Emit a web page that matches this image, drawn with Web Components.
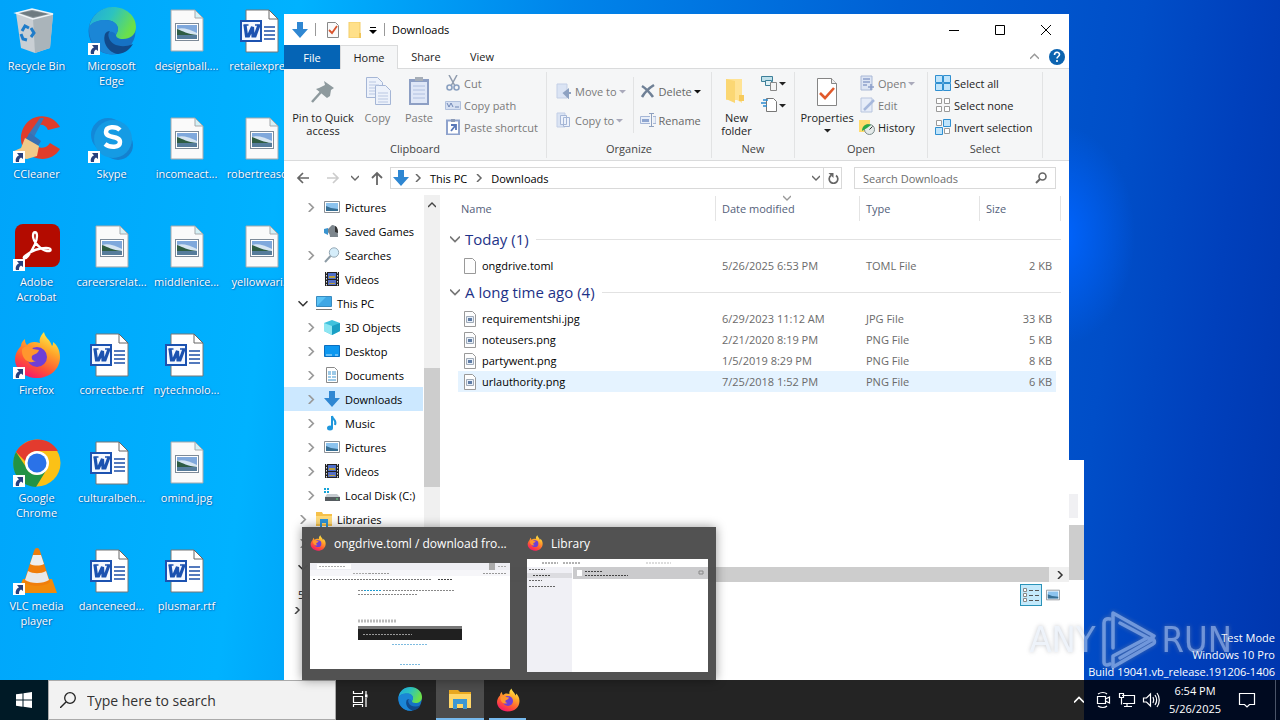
<!DOCTYPE html>
<html lang="en">
<head>
<meta charset="utf-8">
<title>Downloads</title>
<style>
html, body { margin: 0; height: 100%; overflow: hidden; }
body { font-family: "Open Sans", "Noto Sans", sans-serif; font-size: 11px; color: #111; }
</style>
</head>
<body>
<desktop-shell></desktop-shell>
<script>
const ICONS = {
  bin: ['0 0 48 48', '<path d="M3 6l16-4 21 5-3 34-15 5-14-5z" fill="#c9cfd4"/><path d="M3 6l17 6 20-5-21-5z" fill="#8b969c"/><path d="M7 6l13 4 15-3-16-3z" fill="#6d7a80"/><path d="M20 12l20-5-3 34-15 5z" fill="#aab4ba"/><path d="M3 6l17 6 20-5-21-5z" fill="none" stroke="#eef4f7" stroke-width="1.500"/><g fill="none" stroke="#1f7cc9" stroke-width="3"><path d="M9 24l3-5 4 2M18 21l3 5-3 4M14 33l-4-1-2-5"/></g>'],
  edge: ['0 0 48 48', '<defs><linearGradient id="a" x1="0" y1="0" x2="1" y2=".4"><stop offset="0" stop-color="#1fa8e0"/><stop offset=".5" stop-color="#2cc3c0"/><stop offset="1" stop-color="#6be04a"/></linearGradient></defs><circle cx="24" cy="24" r="23.500" fill="#1672c4"/><path d="M1 21C3 8 13 0 25 0c13 0 23 9 23 20 0 8-6 12-13 12-5 0-7-2-7-4 0-1 2-3 2-6 0-5-5-9-12-9C10 13 3 16 1 21z" fill="url(#a)"/><path d="M1 20c3-5 9-7 16-7 8 0 13 4 13 9 0 3-2 5-2 6-3-5-8-4-10 1-2 7 3 15 11 18C12 50 0 36 1 20z" fill="#1b86d6"/><path d="M17 27c-3 9 4 19 13 20 8-1 12-5 15-10-11 5-22 1-24-6-1-3-1-5 1-7-2 0-4 1-5 3z" fill="#114a8b"/>'],
  img: ['0 0 48 48', '<path d="M8 3h24l8 8v33H8z" fill="#fafafa" stroke="#a5a9ad"/><path d="M32 3l8 8h-8z" fill="#d5f0f5" stroke="#a5a9ad"/><rect x="12.500" y="16.500" width="23" height="17" fill="#fff" stroke="#7d8a98"/><path d="M14 18h20v14H14z" fill="#7fa8dc"/><path d="M14 22c5-2 12 0 20 4v2H14z" fill="#d5e4f2"/><path d="M14 22c6 2 10 5 20 6H14z" fill="#2e5c43"/><path d="M14 28h20v4H14z" fill="#567c9b"/>'],
  word: ['0 0 48 48', '<path d="M8 3h23l9 9v33H8z" fill="#fff" stroke="#777"/><path d="M31 3v9h9z" fill="#fff" stroke="#666"/><path d="M26 20h11M26 24h11M26 28h11M26 32h11" stroke="#1c4fa8" stroke-width="1.300"/><rect x="3" y="14" width="20" height="20" fill="#f4f8ff" stroke="#1c52b0" stroke-width="2"/><path d="M7 18l1.500 11h2l4-9 .5 9h2l4-11" fill="none" stroke="#1c52b0" stroke-width="3.200"/><path d="M5.500 18h5M17 18h5" stroke="#1c52b0" stroke-width="1.500"/>'],
  cc: ['0 0 48 48', '<path d="M47 12C41 1 27-2 17 5 6 13 5 30 14 38c10 9 26 8 33-4l-10-6c-4 6-11 6-15 2-5-5-5-12-1-17 4-4 11-5 14 2z" fill="#df3d2b"/><path d="M31 3l-10 19-6-2L27 3z" fill="#3b77b7"/><path d="M17 18l11 8-4 7-12-8z" fill="#3670b4"/><path d="M12 23l14 8-2 10-10 3c-5 0-10-4-13-8l7-3z" fill="#f1c98a"/>'],
  skype: ['0 0 48 48', '<circle cx="20" cy="20" r="17" fill="#1388d8"/><circle cx="30" cy="30" r="15" fill="#1481cf"/><circle cx="25" cy="24" r="19" fill="#159be4"/><path d="M32 15c-4-4-14-4-14 2 0 7 14 3 14 10 0 6-10 6-15 2" fill="none" stroke="#fff" stroke-width="4.500"/>'],
  acrobat: ['0 0 48 48', '<rect x="2" y="1" width="45" height="43" rx="8" fill="#b30b00"/><path d="M12 33c-3 2 0 4 3 0 5-7 9-15 9-20 0-5-4-5-4 0 0 6 8 14 14 15 5 1 5-3-1-3-7 0-15 3-21 8z" fill="none" stroke="#fff" stroke-width="2.300"/>'],
  firefox: ['0 0 48 48', '<defs><linearGradient id="f" x1=".8" y1="0" x2=".3" y2="1"><stop offset="0" stop-color="#fff44f"/><stop offset=".35" stop-color="#ffa82a"/><stop offset=".7" stop-color="#ff5634"/><stop offset="1" stop-color="#f5156c"/></linearGradient></defs><path d="M31 1c-4 4-5 8-4 11-6-2-10-1-13 2-2-2-2-4-2-6-3 2-4 5-4 7-4 4-6 9-6 13 0 11 10 19 22 19s23-8 23-21c0-8-4-13-7-15 0 2 0 3-1 4-2-7-7-8-8-14z" fill="url(#f)"/><circle cx="24" cy="26" r="10" fill="#6f3fd6"/><path d="M9 18c4-4 9-3 11 0l6 1c-1 4-5 4-7 6-1 3 1 5 4 5-8 4-15-3-14-12z" fill="#ff962e"/>'],
  chrome: ['0 0 48 48', '<circle cx="24" cy="24" r="23.500" fill="#fbc116"/><path d="M3 13C12-3 36-4 45 12H24c-6 0-11 5-11 11z" fill="#e33b2e"/><path d="M3 13c-8 16 2 34 20 35l11-18c-6 9-18 7-21-2z" fill="#229345"/><circle cx="24" cy="24" r="12" fill="#fff"/><circle cx="24" cy="24" r="9.500" fill="#2a72e8"/>'],
  vlc: ['0 0 48 48', '<path d="M10 32h29l5 14H4z" fill="#f18a0b"/><path d="M24 1c2 0 2 1 3 3l10 31c-5 5-21 5-26 0L21 4c1-2 1-3 3-3z" fill="#f07e0a"/><path d="M20 8h8l3 9c-4 2-10 2-14 0z" fill="#eee"/><path d="M15 24c5 3 13 3 18 0l3 9c-6 4-18 4-24 0z" fill="#e8e8e8"/>'],
  shortcut: ['0 0 12 12', '<path d="M0 0h12v12H0z" fill="#fff"/><path d="M4 2h6v6L8 6.500C6 8 6 9 6 11H3C2 8 4 5 6 4.500z" fill="#28417e"/>'],
  down: ['0 0 16 16', '<path d="M5 0h6v7h5l-8 9-8-9h5z" fill="#2f87d2"/>'],
  qprop: ['0 0 16 16', '<path d="M2.500.500h8l3 3v12h-11z" fill="#fafafa" stroke="#888"/><path d="M4 8l3 3 5-7" fill="none" stroke="#d9532c" stroke-width="1.800"/>'],
  qfold: ['0 0 16 16', '<path d="M2 0h11v16H2z" fill="#ffe08a"/><path d="M2 0h11v16H2z" fill="none" stroke="#f3cd68"/><path d="M12 11h2v5h-2z" fill="#f0c558"/>'],
  min: ['0 0 10 10', '<path d="M0 5.500h10" stroke="#000"/>'],
  max: ['0 0 10 10', '<path d="M.500.500h9v9h-9z" fill="none" stroke="#000"/>'],
  close: ['0 0 10 10', '<path d="M0 0l10 10M10 0L0 10" stroke="#000"/>'],
  help: ['0 0 16 16', '<circle cx="8" cy="8" r="8" fill="#0b63b0"/><path d="M5.500 6c0-3.500 5-3.500 5-.500C10.500 7.500 8 7.500 8 9.500M8 11v2" fill="none" stroke="#fff" stroke-width="1.600"/>'],
  cup: ['0 0 8 8', '<path d="M0 6l4-4 4 4" fill="none" stroke="currentColor" stroke-width="1.400"/>'],
  cdown: ['0 0 8 8', '<path d="M0 2l4 4 4-4" fill="none" stroke="currentColor" stroke-width="1.400"/>'],
  cright: ['0 0 8 8', '<path d="M2 0l4 4-4 4" fill="none" stroke="currentColor" stroke-width="1.500"/>'],
  tri: ['0 0 7 7', '<path d="M0 2h7L3.500 5.500z" fill="currentColor"/>'],
  qtri: ['0 0 8 8', '<path d="M1 1.500h6" stroke="#000"/><path d="M0 4h8L4 8z"/>'],
  pin: ['0 0 32 32', '<path d="M17 6l10 7-3 2-1 6-3 2-11-9 3-1 6-3z" fill="#8e9a9e"/><path d="M14 17L5 27" stroke="#8e9a9e" stroke-width="2.500"/>'],
  copy: ['0 0 32 32', '<g fill="#edf2fb" stroke="#a5b6d6"><path d="M4.500 2.500h11l5 5v15h-16z"/><path d="M13.500 10.500h10l5 5v14h-15z"/></g><path d="M7 7h7M7 10h10M7 13h6M7 16h6M7 19h6M16 18h10M16 21h10M16 24h10M16 27h10" stroke="#b9c7e2"/>'],
  paste: ['0 0 32 32', '<path d="M6 4h20v26H6z" fill="#8d9fc4"/><path d="M8 7h16v21H8z" fill="#dfe7f7"/><path d="M12 2h8v4h-8z" fill="#a6aeb8"/><path d="M10 11h12M10 15h12M10 19h12M10 23h12" stroke="#b0c0e0"/>'],
  cut: ['0 0 16 16', '<path d="M4 0l6 11M12 0L6 11" stroke="#8f9bad" stroke-width="1.500"/><circle cx="4.500" cy="12.500" r="2.500" fill="none" stroke="#8aa0c0" stroke-width="1.600"/><circle cx="11.500" cy="12.500" r="2.500" fill="none" stroke="#8aa0c0" stroke-width="1.600"/>'],
  path: ['0 0 16 16', '<path d="M.500 4.500h15v8H.500z" fill="#d6e0f2" stroke="#b0c0dd"/><path d="M2 6l2 4 2-4 2 4M10 10h4" fill="none" stroke="#6f86b5"/>'],
  psc: ['0 0 16 16', '<path d="M2 1.500h12v14H2z" fill="#fff" stroke="#8fa3cd" stroke-width="2"/><path d="M6 0h4v3H6z" fill="#8c9bb8"/><path d="M6 6h5v5M10 7l-4 5" fill="none" stroke="#5877b8" stroke-width="1.800"/>'],
  moveto: ['0 0 16 16', '<path d="M1 1h10v14H1z" fill="#dbe4f4" stroke="#c3cfe6"/><path d="M15 10h-5M12 7l-4 3 4 4z" stroke="#8ea2c2" stroke-width="2" fill="#8ea2c2"/>'],
  copyto: ['0 0 16 16', '<path d="M1 1h8v14H1z" fill="#dbe4f4" stroke="#c3cfe6"/><path d="M4.500 3.500h6v9h-6zM7.500 5.500h6v9h-6z" fill="#edf2fb" stroke="#a5b6d6"/>'],
  del: ['0 0 16 16', '<path d="M2 3c5 3 8 7 11 11M14 2C9 5 5 9 2 14" fill="none" stroke="#6f8096" stroke-width="2.600"/>'],
  ren: ['0 0 16 16', '<path d="M10 4.500H.500v7H10M13 4.500h3v7h-3" fill="#e8eef8" stroke="#a5b6d6"/><path d="M2 7h7v3H2z" fill="#8fa6d0"/><path d="M9 1.500h5M9 14.500h5M11.500 1.500v13" stroke="#8ea0bf"/>'],
  nfold: ['0 0 32 32', '<path d="M5 4h16v24l-5-3H5z" fill="#ffe394"/><path d="M5 4l9 2v22l-9-4z" fill="#fbd773"/><path d="M18 20h5v6h-5z" fill="#f6ca5c"/>'],
  nitem: ['0 0 16 16', '<path d="M.500 1.500h11v5H.500z" fill="#bfe0ea" stroke="#3d7f99"/><path d="M4.500 5.500h6v5h-6z" fill="#dff0f5" stroke="#3d7f99"/><path d="M9.500 7.500h6v8h-6z" fill="#f4f4f4" stroke="#888"/>'],
  easy: ['0 0 16 16', '<path d="M5.500 1.500h7l3 3v10H5.500z" fill="#fff" stroke="#777"/><path d="M2 3h5M0 6h5M2 9h4" stroke="#2b8bd0" stroke-width="1.500"/>'],
  props: ['0 0 32 32', '<path d="M6.500 3.500h14l5 5v22h-19z" fill="#fff" stroke="#858585"/><path d="M20.500 3.500v5h5" fill="#eee" stroke="#858585"/><path d="M9 18l5 5 9-10" fill="none" stroke="#e1592b" stroke-width="2.600"/>'],
  open: ['0 0 16 16', '<path d="M2 1h11v14H2z" fill="#dde5f4" stroke="#a9b8d6"/><path d="M4 4h7M4 7h7M4 10h4" stroke="#8da0ca" stroke-width="1.500"/><path d="M12 9v6M9 12h6" stroke="#8da0ca" stroke-width="1.600"/>'],
  edit: ['0 0 16 16', '<path d="M2 1h11v14H2z" fill="#e6ecf8" stroke="#b8c5de"/><path d="M15 3L5 13" stroke="#a7b8dc" stroke-width="2.500"/>'],
  hist: ['0 0 16 16', '<path d="M0 1h11v12H0z" fill="#ffdc6e"/><circle cx="10.500" cy="10.500" r="5" fill="#e4eaea" stroke="#7b8b8b"/><path d="M10.500 10.500l3-3" stroke="#333"/><path d="M3 12c0-6 5-8 9-6L8 9z" fill="#2aa946"/>'],
  sall: ['0 0 16 16', '<g fill="#bfe4fb" stroke="#2f8fd0"><path d="M.500.500h7v7h-7zM8.500.500h7v7h-7zM.500 8.500h7v7h-7zM8.500 8.500h7v7h-7z"/></g>'],
  snone: ['0 0 16 16', '<g fill="#fff" stroke="#9a9a9a"><path d="M1.500 1.500h5v5h-5zM9.500 1.500h5v5h-5zM1.500 9.500h5v5h-5zM9.500 9.500h5v5h-5z"/></g>'],
  sinv: ['0 0 16 16', '<g fill="#fff" stroke="#9a9a9a"><path d="M1.500 1.500h5v5h-5zM9.500 9.500h5v5h-5z"/></g><g fill="#bfe4fb" stroke="#2f8fd0"><path d="M8.500.500h7v7h-7zM.500 8.500h7v7h-7z"/></g>'],
  back: ['0 0 14 14', '<path d="M13 7H2M7 2L2 7l5 5" fill="none" stroke="currentColor" stroke-width="1.700"/>'],
  fwd: ['0 0 14 14', '<path d="M1 7h11M7 2l5 5-5 5" fill="none" stroke="currentColor" stroke-width="1.700"/>'],
  up: ['0 0 14 14', '<path d="M7 14V2M2 7l5-5 5 5" fill="none" stroke="currentColor" stroke-width="1.800"/>'],
  refresh: ['0 0 12 12', '<path d="M9 3.500a4.300 4.300 0 1 1-5 0" fill="none" stroke="#666" stroke-width="1.700"/><path d="M1.500 1h5v5z" fill="#666"/>'],
  lens: ['0 0 12 12', '<circle cx="7.500" cy="4.500" r="3.500" fill="none" stroke="#666" stroke-width="1.600"/><path d="M5 7l-4 4" stroke="#666" stroke-width="2"/>'],
  pics: ['0 0 16 16', '<path d="M.500 2.500h15v11H.500z" fill="#fff" stroke="#8a9096"/><path d="M2 4h12v8H2z" fill="#8cc3ee"/><path d="M2 7l5 2 7 1v2H2z" fill="#376f94"/>'],
  games: ['0 0 16 16', '<path d="M6 14c0-5-3-4-3-7l5-5c5 0 6 5 6 12z" fill="#7d868d"/><path d="M11 3c3 1 3 5 3 7l-3-1z" fill="#333"/><path d="M0 6l4-1v7l-4-2z" fill="#3a94cf"/>'],
  search: ['0 0 16 16', '<circle cx="10" cy="5.500" r="4.700" fill="#d5edfa" stroke="#96a9b5"/><path d="M6.500 9L1 15" stroke="#8c9ba5" stroke-width="2"/>'],
  vids: ['0 0 16 16', '<path d="M1 1h14v14H1z" fill="#222"/><path d="M4 2h8v6H4z" fill="#4f6fc9"/><path d="M4 9h8v5H4z" fill="#5670c4"/><path d="M5 5h6v2H5zM5 12h6v1H5z" fill="#b9a03c"/><path d="M2.500 1v14M13.500 1v14" stroke="#ddd" stroke-dasharray="1.500 1.500"/>'],
  pc: ['0 0 16 16', '<path d="M.500 1.500h15v10H.500z" fill="#5cc3f5" stroke="#388bc0"/><path d="M1 11l9-9h5v9z" fill="#3fa7e5"/><path d="M0 14.500h16" stroke="#777"/>'],
  obj: ['0 0 16 16', '<path d="M0 4l8-3 8 3v8l-8 4-8-4z" fill="#3fc2dd"/><path d="M0 4l8 3v9l-8-4z" fill="#8ee6f2"/><path d="M8 7l8-3v8l-8 4z" fill="#199fc4"/>'],
  desk: ['0 0 16 16', '<path d="M.500 2.500h15v11H.500z" fill="#0d98f0" stroke="#0a6fc0"/><path d="M2 12h6M11 12h3" stroke="#bfe4ff"/>'],
  docs: ['0 0 16 16', '<path d="M2.500.500h8l3 3v12h-11z" fill="#fff" stroke="#8a8a8a"/><path d="M4 5h3M4 7h3M8 5h4M8 7h4M4 10h3M8 10h4M4 13h8" stroke="#3b94d0"/>'],
  music: ['0 0 16 16', '<path d="M8 1c1 4 5 4 3 9" fill="none" stroke="#1f97dc" stroke-width="2"/><path d="M8 1v12" stroke="#1f97dc" stroke-width="2"/><ellipse cx="6" cy="13" rx="3" ry="2.500" fill="#1f97dc"/>'],
  disk: ['0 0 16 16', '<path d="M0 1h2v2H0zM3 1h2v2H3zM0 4h2v2H0zM3 4h2v2H3z" fill="#16a4d8"/><path d="M3 7h10l3 3v4H1v-4z" fill="#c5cbd0"/><path d="M1 10h15v4H1z" fill="#555b60"/><path d="M12 12h2" stroke="#5fe07a"/>'],
  libs: ['0 0 16 16', '<path d="M0 1h6l1 2h9v12H0z" fill="#f6c14a"/><path d="M0 5h16v8H0z" fill="#ffdb7a"/><path d="M4 8h8v8h-2v-4H6v4H4z" fill="#2f95d8"/>'],
  file: ['0 0 16 16', '<path d="M2.500.500h8l3 3v12h-11z" fill="#fdfdfd" stroke="#999"/>'],
  pfile: ['0 0 16 16', '<path d="M2.500.500h8l3 3v12h-11z" fill="#fdfdfd" stroke="#999"/><path d="M4.500 5.500h7v6h-7z" fill="#e8eff8" stroke="#a0abb8"/><path d="M6 7h4v3H6z" fill="#5f7ca5"/>'],
  details: ['0 0 16 14', '<path d="M.500.500h3v3h-3zM.500 5.500h3v3h-3zM.500 10.500h3v3h-3z" fill="#fff" stroke="#888"/><path d="M6 2.500h4M12 2.500h4M6 7.500h4M12 7.500h4M6 12.500h4M12 12.500h4" stroke="#555"/>'],
  win: ['0 0 16 16', '<path d="M0 2.300L6.500 1.400v6.200H0zM7.500 1.200L16 0v7.600H7.500zM0 8.500h6.500v6.200L0 13.800zM7.500 8.500H16V16l-8.500-1.200z" fill="#fff"/>'],
  tsearch: ['0 0 16 16', '<circle cx="10" cy="6" r="5.300" fill="none" stroke="#222" stroke-width="1.300"/><path d="M6 10l-6 6" stroke="#222" stroke-width="1.400"/>'],
  tview: ['0 0 16 16', '<path d="M1.500 0v2.500h9V0M1.500 5.500h9v6h-9zM1.500 16v-2.500h9V16M14 0v4M14 7v9" fill="none" stroke="#fff" stroke-width="1.200"/><path d="M13 3.500h2.500v3H13z" fill="#fff"/>'],
  texp: ['0 0 24 24', '<path d="M1 3h9l2 2h11v16H1z" fill="#e9a820"/><path d="M1 7h22v14H1z" fill="#ffd668"/><path d="M5 12h14v10h-4v-5H9v5H5z" fill="#3c97d3"/>'],
  meet: ['0 0 18 18', '<path d="M3.500 5.500h8v7h-8zM11.500 8l4-2v6l-4-2M4 3c3-2 7-2 9 0M4 15c3 2 7 2 9 0" fill="none" stroke="#fff" stroke-width="1.200"/>'],
  net: ['0 0 18 18', '<path d="M4 4.500h12.500v8H5M9 12.500v3M6 15.500h8M1.500 2.500h4v4h-4zM3.500 6.500v7" fill="none" stroke="#fff" stroke-width="1.200"/>'],
  vol: ['0 0 18 18', '<path d="M1.500 7v4h3l4 4V3l-4 4zM11 6c1 2 1 4 0 6M13 4c2 3 2 7 0 10M15 2c3 4 3 10 0 14" fill="none" stroke="#fff" stroke-width="1.200"/>'],
  note: ['0 0 18 18', '<path d="M1.500 2.500h15v11h-5L9 16l-2.500-2.500h-5z" fill="none" stroke="#fff" stroke-width="1.200"/>'],
  play: ['0 0 56 60', '<g fill="none" stroke="#dfe9f7" stroke-width="3.500" stroke-linejoin="round" stroke-linecap="round"><path d="M12 38V3l41 23-4 3-30-16M12 38V14M19 48l33-19c2 2 2 4 0 5L12 57V46l34-18"/><path d="M9 9c-4-1-6 1-6 4v39c0 3 3 4 6 2"/></g>']
};

const ui = (name, css, html) => {
  customElements.define(name, class extends HTMLElement {
    constructor() {
      super();
      const tpl = document.createElement('template');
      tpl.innerHTML = `<style>*{box-sizing:border-box}button{font:inherit;color:inherit;background:none;border:0;padding:0;margin:0}${css}</style>` +
        (typeof html === 'function' ? html(n => this.getAttribute(n) || '') : html);
      this.attachShadow({ mode: 'open' }).append(tpl.content.cloneNode(true));
    }
  });
};

ui('ui-icon', ':host{display:block;flex:none;width:16px;height:16px}svg{display:block;width:100%;height:100%}',
  a => `<svg viewBox="${ICONS[a('name')][0]}" aria-hidden="true">${ICONS[a('name')][1]}</svg>`);

/* ---------- desktop icons ---------- */
ui('desk-icon', `:host{display:block;color:#fff;text-align:center}
  a{display:flex;flex-direction:column;align-items:center;gap:3px;color:inherit;text-decoration:none;padding-top:7px}
  .pic{position:relative}.pic>ui-icon:first-child{width:48px;height:48px}
  .sc{position:absolute;left:0;bottom:0;width:12px;height:12px}
  span{line-height:15px;text-shadow:0 0 2px #0055a0,1px 1px 1px #0060b080;white-space:pre}`,
  a => `<a href="#"><div class="pic"><ui-icon name="${a('icon')}"></ui-icon>${a('link') ? '<ui-icon class="sc" name="shortcut"></ui-icon>' : ''}</div><span>${a('label').replace('|', '\n')}</span></a>`);

const files = [
  [['bin','Recycle Bin'],['cc','CCleaner',1],['acrobat','Adobe|Acrobat',1],['firefox','Firefox',1],['chrome','Google|Chrome',1],['vlc','VLC media|player',1]],
  [['edge','Microsoft|Edge',1],['skype','Skype',1],['img','careersrelat...'],['word','correctbe.rtf'],['word','culturalbeh...'],['word','danceneed...']],
  [['img','designball....'],['img','incomeact...'],['img','middlenice...'],['word','nytechnolo...'],['img','omind.jpg'],['word','plusmar.rtf']],
  [['word','retailexpre...'],['img','robertreaso...'],['img','yellowvari...']]
];
ui('desk-icons', `:host{display:grid;grid-template-rows:repeat(6,108px);grid-auto-flow:column;grid-auto-columns:75px}`,
  files.flat().map(([i, l, s]) => `<desk-icon icon="${i}" label="${l}" ${s ? 'link="1"' : ''}></desk-icon>`).join(''));

/* ---------- explorer ---------- */
ui('title-bar', `:host{display:flex;align-items:center;height:31px;padding-left:8px;background:#fff;font-size:11px;color:#000}
  .s{width:1px;height:13px;background:#999;margin:0 9px 0 7px}h1{font:inherit;margin:0;flex:1}
  .w{display:flex}.w button{width:46px;height:30px;display:grid;place-items:center}.w ui-icon{width:10px;height:10px}
  .q{margin-right:6px}.t{width:8px;height:8px}.s.last{margin:0 7px}`,
  `<ui-icon name="down"></ui-icon><i class="s"></i><button class="q" aria-label="Properties"><ui-icon name="qprop"></ui-icon></button><button class="q" aria-label="New folder"><ui-icon name="qfold"></ui-icon></button><button aria-label="Customize"><ui-icon class="t" name="qtri"></ui-icon></button><i class="s last"></i><h1>Downloads</h1>
  <div class="w"><button aria-label="Minimize"><ui-icon name="min"></ui-icon></button><button aria-label="Maximize"><ui-icon name="max"></ui-icon></button><button aria-label="Close"><ui-icon name="close"></ui-icon></button></div>`);

ui('ribbon-tabs', `:host{display:flex;align-items:stretch;height:24px;color:#222}
  button{width:56px}.file{background:#0564b5;color:#fff}.home{width:58px;background:#f5f6f7;border:1px solid #dadbdc;border-bottom:0}
  .bar{flex:1;display:flex;border-bottom:1px solid #dadbdc}.sp{flex:1}.bar .c{width:26px;display:grid;place-items:center;color:#999}.c ui-icon{width:9px;height:9px}
  .bar .h{width:20px;margin-right:2px;display:grid;place-items:center}`,
  `<button class="file">File</button><button class="home">Home</button><div class="bar"><button>Share</button><button>View</button><span class="sp"></span><button class="c" aria-label="Collapse ribbon"><ui-icon name="cup"></ui-icon></button><button class="h" aria-label="Help"><ui-icon name="help"></ui-icon></button></div>`);

ui('big-cmd', `:host{display:block;color:#222;text-align:center}:host([off]){color:#7a7a7a}
  button{display:flex;flex-direction:column;align-items:center;width:100%;line-height:13px;white-space:pre-line}.p{width:32px;height:32px;margin-bottom:4px}
  .t{width:7px;height:7px;margin-top:3px}`,
  a => `<button><ui-icon class="p" name="${a('icon')}"></ui-icon>${a('label').replace('|', '\n')}${a('menu') ? '<ui-icon class="t" name="tri"></ui-icon>' : ''}</button>`);
ui('small-cmd', `:host{display:block;color:#222}:host([off]){color:#7a7a7a}:host([dim]){color:#666}
  button{display:flex;align-items:center;gap:3px;height:22px;white-space:nowrap}.t{width:7px;height:7px;margin-left:-1px}:host([dim]) .t{color:#111}:host([off]) .t{color:#aab}`,
  a => `<button aria-label="${a('label') || a('title')}"><ui-icon name="${a('icon')}"></ui-icon>${a('label')}${a('menu') ? '<ui-icon class="t" name="tri"></ui-icon>' : ''}</button>`);
ui('ribbon-group', `:host{display:flex;flex-direction:column;border-right:1px solid #e2e3e4;margin:3px 0 2px}
  .b{flex:1;display:flex;align-items:flex-start}.l{text-align:center;line-height:18px;color:#444;height:18px}`,
  a => `<div class="b"><slot></slot></div><div class="l">${a('label')}</div>`);

ui('ribbon-bar', `:host{display:grid;grid-template-columns:263px 165px 83px 133px 115px 1fr;height:92px;background:#f5f6f7;border-bottom:1px solid #dadbdc}
  big-cmd{margin-top:3px}.col{display:flex;flex-direction:column}
  .org{gap:7px;padding:8px 0 0 9px}.sep{width:1px;height:56px;background:#e2e3e4;margin:5px 6px 0 7px}`,
  `<ribbon-group label="Clipboard"><big-cmd style="width:78px" icon="pin" label="Pin to Quick|access"></big-cmd><big-cmd off style="width:31px" icon="copy" label="Copy"></big-cmd><big-cmd off style="width:52px" icon="paste" label="Paste"></big-cmd>
   <div class="col"><small-cmd off icon="cut" label="Cut"></small-cmd><small-cmd off icon="path" label="Copy path"></small-cmd><small-cmd off icon="psc" label="Paste shortcut"></small-cmd></div></ribbon-group>
  <ribbon-group label="Organize"><div class="col org"><small-cmd off menu="1" icon="moveto" label="Move to"></small-cmd><small-cmd off menu="1" icon="copyto" label="Copy to"></small-cmd></div><i class="sep"></i><div class="col org" style="padding-left:0"><small-cmd dim menu="1" icon="del" label="Delete"></small-cmd><small-cmd dim icon="ren" label="Rename"></small-cmd></div></ribbon-group>
  <ribbon-group label="New"><big-cmd style="width:49px" icon="nfold" label="New|folder"></big-cmd><div class="col"><small-cmd menu="1" icon="nitem" title="New item"></small-cmd><small-cmd menu="1" icon="easy" title="Easy access"></small-cmd></div></ribbon-group>
  <ribbon-group label="Open"><big-cmd style="width:64px" menu="1" icon="props" label="Properties"></big-cmd><div class="col"><small-cmd off menu="1" icon="open" label="Open"></small-cmd><small-cmd off icon="edit" label="Edit"></small-cmd><small-cmd icon="hist" label="History"></small-cmd></div></ribbon-group>
  <ribbon-group label="Select"><div class="col" style="padding-left:7px"><small-cmd icon="sall" label="Select all"></small-cmd><small-cmd icon="snone" label="Select none"></small-cmd><small-cmd icon="sinv" label="Invert selection"></small-cmd></div></ribbon-group>`);

ui('address-row', `:host{display:flex;align-items:center;height:34px;padding:0 13px 0 12px;color:#666}
  .n{display:flex;align-items:center;gap:16px;width:94px}.n ui-icon{width:14px;height:14px}.n ui-icon.c{width:8px;height:8px}.n button:nth-child(2){color:#ccc}
  .n button:nth-child(3){margin:0 -5px}
  .a{flex:1;display:flex;align-items:center;height:22px;border:1px solid #d9d9d9;color:#000}.a>ui-icon{margin:0 5px 0 2px}.a>ui-icon.c{width:8px;height:8px;color:#666;margin:0 8px 0 0}
  .a>ui-icon.e{margin-right:3px}.a a{color:inherit;text-decoration:none;margin-right:8px}.sp{flex:1}.r{width:18px;height:20px;border-left:1px solid #d9d9d9;display:grid;place-items:center}.r ui-icon{width:12px;height:12px}
  .s{width:202px;height:22px;margin-left:12px;border:1px solid #d9d9d9;display:flex;align-items:center;padding:0 8px}
  input{flex:1;min-width:0;border:0;outline:0;font:inherit;background:none;padding:0}input::placeholder{color:#6d6d6d;opacity:1}.s ui-icon{width:12px;height:12px}`,
  `<div class="n"><button aria-label="Back"><ui-icon name="back"></ui-icon></button><button aria-label="Forward"><ui-icon name="fwd"></ui-icon></button><button aria-label="Recent"><ui-icon class="c" name="cdown"></ui-icon></button><button aria-label="Up"><ui-icon name="up"></ui-icon></button></div>
  <div class="a"><ui-icon name="down"></ui-icon><ui-icon class="c" name="cright"></ui-icon><a href="#">This PC</a><ui-icon class="c" name="cright"></ui-icon><a href="#">Downloads</a><span class="sp"></span><ui-icon class="c e" name="cdown"></ui-icon><button class="r" aria-label="Refresh"><ui-icon name="refresh"></ui-icon></button></div>
  <div class="s"><input aria-label="Search Downloads" placeholder="Search Downloads"><ui-icon name="lens"></ui-icon></div>`);

const tree = [[2,'pics','Pictures','right'],[2,'games','Saved Games',''],[2,'search','Searches','right'],[2,'vids','Videos',''],[1,'pc','This PC','down'],[2,'obj','3D Objects','right'],[2,'desk','Desktop','right'],[2,'docs','Documents','right'],[2,'down','Downloads','right',1],[2,'music','Music','right'],[2,'pics','Pictures','right'],[2,'vids','Videos','right'],[2,'disk','Local Disk (C:)','right'],[1,'libs','Libraries','right'],[1,'','','right'],[1,'','','down']];
ui('nav-tree', `:host{display:flex;width:156px;overflow:hidden}.l{width:139px;margin-right:1px}
  .row{display:flex;align-items:center;height:24px;padding-left:22px;color:#000;white-space:nowrap}.row.one{padding-left:14px}.row.on{background:#cce8ff}
  .c{width:10px;height:9px;margin-right:8px;color:#999}.c.down{color:#333}.i{margin-right:5px}
  .s{width:16px;background:#f0f0f0;display:flex;flex-direction:column;align-items:center;color:#444}.s ui-icon{width:8px;height:8px;margin:6px 0 5px}.th{width:100%;height:119px;margin-top:154px;background:#cdcdcd}`,
  `<div class="l" role="tree">` + tree.map(([lv, ic, t, c, on]) => `<div class="row ${lv == 1 ? 'one' : ''} ${on ? 'on' : ''}" role="treeitem">${c ? `<ui-icon class="c ${c}" name="c${c}"></ui-icon>` : '<span class="c"></span>'}${ic ? `<ui-icon class="i" name="${ic}"></ui-icon>${t}` : ''}</div>`).join('') + `</div><div class="s"><ui-icon name="cup"></ui-icon><div class="th"></div></div>`);

const row = (n, d, t, s, i, on) => `<tr class="f ${on ? 'on' : ''}"><td></td><td><span class="n"><ui-icon name="${i}"></ui-icon>${n}</span></td><td>${d}</td><td>${t}</td><td class="z">${s}</td><td></td></tr>`;
const grp = t => `<tr class="g"><th colspan="6" scope="rowgroup"><span><ui-icon name="cdown"></ui-icon>${t}<i></i></span></th></tr>`;
ui('file-table', `:host{display:block;flex:1;padding:0 8px 0 10px;min-width:0}
  table{width:100%;border-collapse:collapse;table-layout:fixed;color:#6a6a6a}th{font-weight:400;text-align:left}th,td{padding:0}
  thead th{height:28px;color:#54617a;padding:0 0 2px 6px;position:relative}thead th:nth-child(2){padding-left:3px}thead th:nth-child(n+2):not(:nth-child(5)){background:linear-gradient(#e4e4e4,#e4e4e4) right 0 top 1px/1px 25px no-repeat}
  .sort{position:absolute;left:67px;top:-1px;width:8px;height:8px;color:#999}
  .g th{height:32px}.g span{display:flex;align-items:center;font-size:15px;color:#1e3287;gap:5px}.g ui-icon{width:10px;height:10px;color:#777}.g i{flex:1;height:1px;background:#e2e2e2;margin-left:2px}
  .f td{height:21px;padding-left:6px}.f td:first-child{padding:0}.f .n{display:flex;align-items:center;gap:4px;color:#000}.f .z{text-align:right;padding:0 4px 0 0}
  .on td:nth-child(n+2):not(:last-child){background:#e5f3ff}.f td:nth-child(2){padding-left:4px}`,
  `<table><colgroup><col style="width:8px"><col><col style="width:144px"><col style="width:120px"><col style="width:76px"><col style="width:5px"></colgroup>
  <thead><tr><th></th><th scope="col">Name</th><th scope="col">Date modified<ui-icon class="sort" name="cdown"></ui-icon></th><th scope="col">Type</th><th scope="col">Size</th><th></th></tr></thead><tbody>`
  + grp('Today (1)') + row('ongdrive.toml', '5/26/2025 6:53 PM', 'TOML File', '2 KB', 'file')
  + grp('A long time ago (4)') + row('requirementshi.jpg', '6/29/2023 11:12 AM', 'JPG File', '33 KB', 'pfile') + row('noteusers.png', '2/21/2020 8:19 PM', 'PNG File', '5 KB', 'pfile') + row('partywent.png', '1/5/2019 8:29 PM', 'PNG File', '8 KB', 'pfile') + row('urlauthority.png', '7/25/2018 1:52 PM', 'PNG File', '6 KB', 'pfile', 1)
  + `</tbody></table>`);

ui('explorer-window', `:host{display:flex;flex-direction:column;background:#fff;overflow:hidden}
  .m{flex:1;display:flex;min-height:0}.right{flex:1;display:flex;flex-direction:column;min-width:0}.h{height:15px;background:#f0f0f0;display:flex;justify-content:flex-end;align-items:center;padding-left:20px;color:#333}
  .h i{flex:1;height:100%;background:#cdcdcd}.h ui-icon{width:8px;height:8px;margin:0 5px 0 7px}
  .st{display:flex;align-items:center;height:25px;padding:0 5px 0 14px;color:#222}.st span{flex:1}.st button{width:22px;height:22px;display:grid;place-items:center}.st .a{background:#c3e9fb;border:1px solid #2a93b9}.st .a ui-icon{width:16px;height:14px}.st .b ui-icon{width:14px;height:14px}`,
  `<title-bar></title-bar><ribbon-tabs></ribbon-tabs><ribbon-bar></ribbon-bar><address-row></address-row>
  <div class="m"><nav-tree></nav-tree><div class="right"><file-table></file-table><div class="h"><i></i><ui-icon name="cright"></ui-icon></div></div></div>
  <div class="st"><span>5 items</span><button class="a" aria-label="Details view"><ui-icon name="details"></ui-icon></button><button class="b" aria-label="Large icons"><ui-icon name="pics"></ui-icon></button></div>`);

/* window that lies behind the explorer */
ui('back-window', `:host{display:flex;flex-direction:column;align-items:flex-end;background:#fff}
  .a{width:9px;height:24px;margin:34px 6px 7px 0;background:#f0f0f3}.b{width:15px;height:55px;background:#cdcdcd}.x{align-self:flex-start;margin:26px 0 0 9px;width:8px;height:8px;color:#444}`,
  `<div class="a"></div><div class="b"></div><ui-icon class="x" name="cright"></ui-icon>`);

/* ---------- taskbar previews ---------- */
ui('task-preview', `:host{display:flex;flex-direction:column;color:#fff;font-size:12px}
  .t{display:flex;align-items:center;gap:8px;height:32px;white-space:nowrap}.p{flex:1;display:flex;align-items:center}`,
  a => `<div class="t"><ui-icon name="firefox"></ui-icon><span>${a('label')}</span></div><div class="p"><slot></slot></div>`);
ui('browser-thumb', ':host,svg{display:block}', `<svg width="200" height="106" viewBox="0 0 200 106"><path d="M0 0h200v106H0z" fill="#fff"/><path d="M0 0h200v7H0z" fill="#eeeef3"/><path d="M7 1h34v5H7z" fill="#fff"/><path d="M179 0h6v7h-6z" fill="#aaa"/><path d="M0 7h200v6H0z" fill="#f6f6f9"/><g fill="none" stroke-dasharray="2 1"><path d="M9 3.500h26M43 10.500h16M188 3.500h8" stroke="#aaa"/><path d="M59 10.500h20M173 10.500h24" stroke="#999"/><path d="M8 16.500h114" stroke="#777"/><path d="M128 16.500h15M3 16.500h3" stroke="#444"/><path d="M48 27.500h5M73 27.500h72M48 31.500h60" stroke="#888"/><path d="M54 27.500h17" stroke="#1d9bd0"/><path d="M48 58h38" stroke="#bbb" stroke-width="3"/><path d="M82 81.500h36M90 101.500h21" stroke="#7dbbe0"/></g><path d="M48 63h104v3H48z" fill="#777"/><path d="M48 66h104v11H48z" fill="#202020"/><path d="M53 71.500h49" stroke="#999" stroke-dasharray="2 1"/></svg>`);
ui('library-thumb', ':host,svg{display:block}', `<svg width="181" height="113" viewBox="0 0 181 113"><path d="M0 0h181v113H0z" fill="#fff"/><path d="M0 8h45v105H0z" fill="#f0f0f5"/><path d="M0 14h45v5H0z" fill="#dcdce0"/><path d="M46 8h135v12H46z" fill="#cbcbcd"/><path d="M50 11h5v6h-5z" fill="#fff"/><g stroke-dasharray="2 1"><path d="M15 4h16M36 4h18" stroke="#666"/><path d="M119 4h25" stroke="#bbb"/><path d="M2 10.500h16M2 21.500h13M2 27.500h26" stroke="#666"/><path d="M6 16.500h17M58 12.500h18M58 16.500h43" stroke="#444"/></g><path d="M172 12h4v3h-4z" fill="none" stroke="#888"/></svg>`);
ui('preview-strip', `:host{display:flex;gap:17px;padding:0 8px 8px;background:#4f4f4ffa;box-shadow:0 0 10px #0006}`,
  `<task-preview label="ongdrive.toml / download fro..."><browser-thumb></browser-thumb></task-preview><task-preview label="Library"><library-thumb></library-thumb></task-preview>`);

/* ---------- watermarks ---------- */
ui('any-run', `:host{display:flex;align-items:center;gap:5px;color:#dfe9f7;opacity:.5;font:36px/60px "Liberation Sans Narrow","DejaVu Sans Condensed",sans-serif;filter:drop-shadow(0 0 2px #8a8f9a)}ui-icon{width:56px;height:60px}`,
  `<span>ANY</span><ui-icon name="play"></ui-icon><span>RUN</span>`);
ui('build-mark', ':host{display:block;color:#fff;text-align:right;line-height:17px}', '<div>Test Mode</div><div>Windows 10 Pro</div><div>Build 19041.vb_release.191206-1406</div>');

/* ---------- taskbar ---------- */
ui('task-bar', `:host{display:flex;height:40px;color:#fff;background:linear-gradient(90deg,#242424 calc(100% - 196px),#000a20 calc(100% - 196px))}
  button{display:grid;place-items:center}.start{width:48px;background:#001a26}
  label{width:288px;border:1px solid #aaa;background:#f2f2f2;display:flex;align-items:center;gap:11px;padding-left:11px}input{flex:1;min-width:0;border:0;background:none;outline:0;padding:0;font:inherit;font-size:14px}input::placeholder{color:#333;opacity:1}
  .b{width:48px;border-bottom:2px solid transparent}.b ui-icon{width:24px;height:24px}.b.v ui-icon{width:16px;height:16px}.b.e{width:52px}.on{background:#4c4c4c;border-color:#76b9ed}.ff{border:0;position:relative}.ff::after{content:"";position:absolute;left:5px;right:6px;bottom:0;height:2px;background:#76b9ed}
  .sp{flex:1}.k{width:24px}.k ui-icon{width:18px;height:18px}.ch ui-icon{width:10px;height:10px}.clk{width:64px;line-height:18px;align-content:center}.nt{width:40px}.nt ui-icon{width:18px;height:18px}.sd{width:5px;border-left:1px solid #4a5468}.g{width:8px}`,
  `<button class="start" aria-label="Start"><ui-icon name="win"></ui-icon></button><label><ui-icon name="tsearch"></ui-icon><input aria-label="Search" placeholder="Type here to search"></label>
  <button class="b v" aria-label="Task View"><ui-icon name="tview"></ui-icon></button><button class="b e" aria-label="Microsoft Edge"><ui-icon name="edge"></ui-icon></button><button class="b on" aria-label="File Explorer"><ui-icon name="texp"></ui-icon></button><button class="b ff" aria-label="Firefox"><ui-icon name="firefox"></ui-icon></button>
  <span class="sp"></span><button class="k ch" aria-label="Show hidden icons"><ui-icon name="cup"></ui-icon></button><button class="k" aria-label="Meet Now"><ui-icon name="meet"></ui-icon></button><button class="k" aria-label="Network"><ui-icon name="net"></ui-icon></button><button class="k" aria-label="Volume"><ui-icon name="vol"></ui-icon></button>
  <button class="clk"><span>6:54 PM</span><span>5/26/2025</span></button><button class="nt" aria-label="Notifications"><ui-icon name="note"></ui-icon></button><i class="g"></i><button class="sd" aria-label="Show desktop"></button>`);

ui('desktop-shell', `:host{display:flex;flex-direction:column;height:100%;overflow:hidden}
  main{flex:1;position:relative;min-height:0;background:radial-gradient(ellipse 75px 110px at calc(100% - 220px) 235px,#0064ff,#0064ff00),linear-gradient(97deg,#00a4fa 0,#00b2ff 22%,#0084ea 42%,#0060d4 66%,#004ec8 84%,#0040bc 92%,#0036ae 100%)}
  desk-icons{margin-left:-1px}back-window,explorer-window,preview-strip,any-run,build-mark{position:absolute}
  back-window{inset:460px 196px 0 284px}explorer-window{inset:14px 211px 73px 284px}preview-strip{left:302px;bottom:0}
  build-mark{right:5px;bottom:0}any-run{right:48px;bottom:10px}`,
  `<main><desk-icons></desk-icons><back-window></back-window><explorer-window></explorer-window><build-mark></build-mark><any-run></any-run><preview-strip></preview-strip></main><task-bar></task-bar>`);
</script>
</body>
</html>
